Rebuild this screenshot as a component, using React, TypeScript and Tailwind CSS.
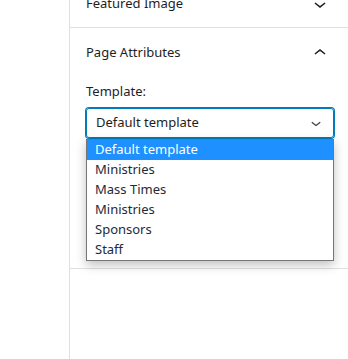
import React from "react";

const ChevronDown = ({ className }: { className?: string }) => (
  <svg viewBox="0 0 24 24" className={className} fill="currentColor" aria-hidden>
    <path d="M17.5 11.6L12 16l-5.5-4.4.9-1.2L12 14l4.6-3.6 1 1.2z" />
  </svg>
);

const ChevronUp = ({ className }: { className?: string }) => (
  <svg viewBox="0 0 24 24" className={className} fill="currentColor" aria-hidden>
    <path d="M6.5 12.4L12 8l5.5 4.4-.9 1.2L12 10l-4.6 3.6-1-1.2z" />
  </svg>
);

const templates = ["Default template", "Ministries", "Mass Times", "Ministries", "Sponsors", "Staff"];

export default function App() {
  return (
    <div
      className="flex h-[359px] w-[348px] overflow-hidden bg-white text-[13px] text-[#1e1e1e]"
      style={{ fontFamily: '"Noto Sans", "Open Sans", sans-serif' }}
    >
      <div className="w-[69px] shrink-0" />
      <div className="flex-1 border-l border-[#e0e0e0]">
        {/* Featured image panel, scrolled mostly out of view */}
        <div className="-mt-[20px] flex h-[48px] items-center justify-between border-b border-[#e0e0e0] pl-4 pr-4">
          <span>Featured Image</span>
          <ChevronDown className="h-6 w-6" />
        </div>

        {/* Page attributes panel */}
        <div className="border-b border-[#e0e0e0]">
          <div className="flex h-[50px] items-center justify-between pl-4 pr-4">
            <span>Page Attributes</span>
            <ChevronUp className="h-6 w-6" />
          </div>
          <div className="h-[190px] pl-4">
            <div className="pt-[3px] leading-[20px]">Template:</div>
            <div className="relative mt-[7px] w-[248px]">
              <div className="flex h-[30px] items-center justify-between rounded-[3px] border border-[#007cba] pl-[9px] pr-[7px] shadow-[0_0_0_1px_#007cba]">
                <span>Default template</span>
                <ChevronDown className="h-[20px] w-[20px] text-[#3c3c3c]" />
              </div>
              <ul className="absolute left-0 top-[31px] z-10 w-[248px] border border-[#767676] bg-white shadow-[0_4px_10px_rgba(0,0,0,0.25)]">
                {templates.map((t, i) => (
                  <li
                    key={i}
                    className={
                      i === 0
                        ? "flex h-[20px] items-center bg-[#1e90ff] pl-[8px] text-white"
                        : "flex h-[20px] items-center pl-[8px] text-[#1e2a3a]"
                    }
                  >
                    {t}
                  </li>
                ))}
              </ul>
            </div>
          </div>
        </div>
      </div>
    </div>
  );
}
